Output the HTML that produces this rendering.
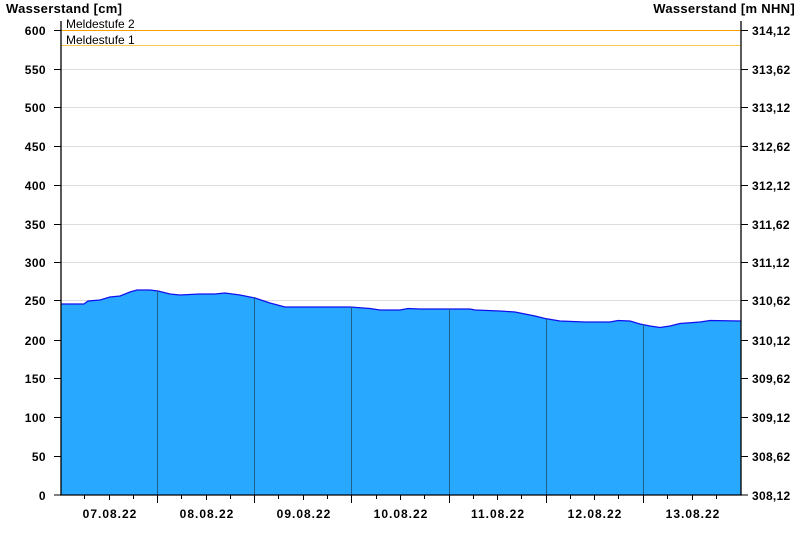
<!DOCTYPE html><html><head><style>body{margin:0;background:#fff}svg text{font-family:"Liberation Sans",sans-serif;font-size:12px;font-weight:bold;fill:#000}</style></head><body>
<svg width="800" height="550" xmlns="http://www.w3.org/2000/svg">
<text x="6" y="13" style="font-size:13px;letter-spacing:0.3px">Wasserstand [cm]</text>
<text x="795" y="13" text-anchor="end" style="font-size:13px;letter-spacing:0.3px">Wasserstand [m NHN]</text>
<g stroke="#ddd" stroke-width="1">
<line x1="61" x2="741" y1="69.5" y2="69.5"/><line x1="61" x2="741" y1="107.5" y2="107.5"/><line x1="61" x2="741" y1="146.5" y2="146.5"/><line x1="61" x2="741" y1="185.5" y2="185.5"/><line x1="61" x2="741" y1="224.5" y2="224.5"/><line x1="61" x2="741" y1="262.5" y2="262.5"/><line x1="61" x2="741" y1="300.5" y2="300.5"/><line x1="61" x2="741" y1="340.5" y2="340.5"/><line x1="61" x2="741" y1="378.5" y2="378.5"/><line x1="61" x2="741" y1="417.5" y2="417.5"/><line x1="61" x2="741" y1="456.5" y2="456.5"/>
</g>
<line x1="61" x2="741" y1="30.5" y2="30.5" stroke="#f5a000"/>
<line x1="61" x2="741" y1="45.5" y2="45.5" stroke="#f8c850"/>
<text x="66" y="28" style="font-weight:normal">Meldestufe 2</text>
<text x="66" y="44" style="font-weight:normal">Meldestufe 1</text>
<path d="M61,304 L84,304 L88,301 L100,300 L110,297 L120,296 L130,292 L137,290 L150,290 L158,291 L170,294 L180,295 L200,294 L215,294 L225,293 L240,295 L255,298 L270,303 L285,307 L350,307 L370,308.5 L380,310 L400,310 L408,308.5 L420,309 L470,309 L475,310 L500,311 L515,312 L525,314 L535,316 L545,318.5 L560,321 L585,322 L610,322 L618,320.5 L630,321 L640,324 L650,326 L660,327.5 L670,326 L680,323.5 L700,322 L710,320.5 L741,321 L741,495 L61,495 Z" fill="#29a8ff" stroke="none"/>
<path d="M61,304 L84,304 L88,301 L100,300 L110,297 L120,296 L130,292 L137,290 L150,290 L158,291 L170,294 L180,295 L200,294 L215,294 L225,293 L240,295 L255,298 L270,303 L285,307 L350,307 L370,308.5 L380,310 L400,310 L408,308.5 L420,309 L470,309 L475,310 L500,311 L515,312 L525,314 L535,316 L545,318.5 L560,321 L585,322 L610,322 L618,320.5 L630,321 L640,324 L650,326 L660,327.5 L670,326 L680,323.5 L700,322 L710,320.5 L741,321" fill="none" stroke="#1010ee" stroke-width="1.3"/>
<g stroke="#1f5f8f" stroke-width="1">
<line x1="157.5" x2="157.5" y1="291" y2="495"/><line x1="254.5" x2="254.5" y1="297" y2="495"/><line x1="351.5" x2="351.5" y1="307" y2="495"/><line x1="449.5" x2="449.5" y1="309" y2="495"/><line x1="546.5" x2="546.5" y1="319" y2="495"/><line x1="643.5" x2="643.5" y1="324" y2="495"/>
</g>
<g stroke="#000" stroke-width="1.3">
<line x1="61" x2="61" y1="21" y2="495"/><line x1="741" x2="741" y1="21" y2="495"/><line x1="60" x2="742" y1="495" y2="495"/>
</g>
<g stroke="#000" stroke-width="1">
<path d="M54,30.5h7M54,69.5h7M54,107.5h7M54,146.5h7M54,185.5h7M54,224.5h7M54,262.5h7M54,300.5h7M54,340.5h7M54,378.5h7M54,417.5h7M54,456.5h7M54,495h7"/>
<path d="M741,30.5h7M741,69.5h7M741,107.5h7M741,146.5h7M741,185.5h7M741,224.5h7M741,262.5h7M741,300.5h7M741,340.5h7M741,378.5h7M741,417.5h7M741,456.5h7M741,495h7"/>
<path d="M157.5,495v8M254.5,495v8M351.5,495v8M449.5,495v8M546.5,495v8M643.5,495v8"/>
<path d="M84.5,495v4M109.5,495v5M133.5,495v4M181.5,495v4M206.5,495v5M230.5,495v4M278.5,495v4M303.5,495v5M327.5,495v4M376.5,495v4M400.5,495v5M424.5,495v4M473.5,495v4M497.5,495v5M521.5,495v4M570.5,495v4M594.5,495v5M618.5,495v4M667.5,495v4M692.5,495v5M716.5,495v4"/>
</g>
<g text-anchor="end" style="letter-spacing:0.4px">
<text x="46" y="35">600</text><text x="46" y="74">550</text><text x="46" y="112">500</text><text x="46" y="151">450</text><text x="46" y="190">400</text><text x="46" y="229">350</text><text x="46" y="267">300</text><text x="46" y="305">250</text><text x="46" y="345">200</text><text x="46" y="383">150</text><text x="46" y="422">100</text><text x="46" y="461">50</text><text x="46" y="500">0</text>
</g>
<g style="letter-spacing:0.3px">
<text x="752" y="35">314,12</text><text x="752" y="74">313,62</text><text x="752" y="112">313,12</text><text x="752" y="151">312,62</text><text x="752" y="190">312,12</text><text x="752" y="229">311,62</text><text x="752" y="267">311,12</text><text x="752" y="305">310,62</text><text x="752" y="345">310,12</text><text x="752" y="383">309,62</text><text x="752" y="422">309,12</text><text x="752" y="461">308,62</text><text x="752" y="500">308,12</text>
</g>
<g text-anchor="middle" style="letter-spacing:1px">
<text x="110" y="518">07.08.22</text><text x="207" y="518">08.08.22</text><text x="304" y="518">09.08.22</text><text x="401" y="518">10.08.22</text><text x="498" y="518">11.08.22</text><text x="595" y="518">12.08.22</text><text x="693" y="518">13.08.22</text>
</g>
</svg></body></html>
